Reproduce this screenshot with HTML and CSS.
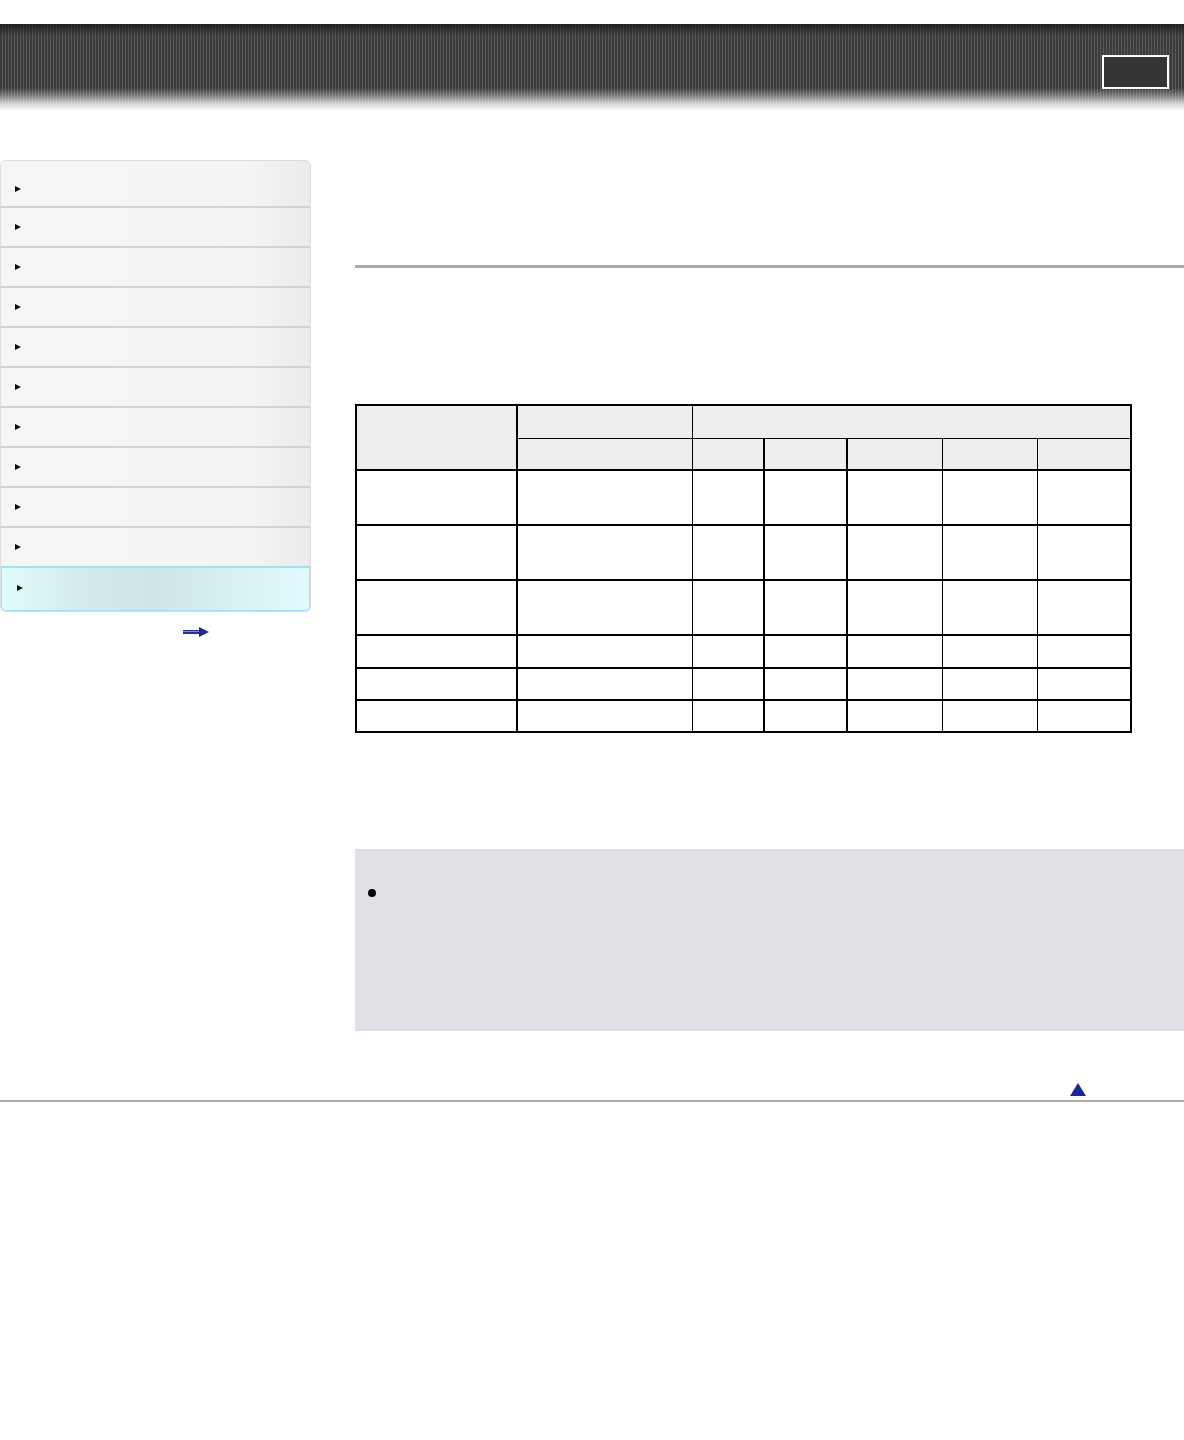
FILE: index.html
```html
<!DOCTYPE html>
<html>
<head>
<meta charset="utf-8">
<link rel="stylesheet" href="styles.css">
</head>
<body>
<header class="banner">
  <div class="banner-box"></div>
</header>
<div class="layout">
  <aside class="sidebar">
    <nav class="menu">
      <div class="item first"><span class="tri"></span></div>
      <div class="item"><span class="tri"></span></div>
      <div class="item"><span class="tri"></span></div>
      <div class="item"><span class="tri"></span></div>
      <div class="item"><span class="tri"></span></div>
      <div class="item"><span class="tri"></span></div>
      <div class="item"><span class="tri"></span></div>
      <div class="item"><span class="tri"></span></div>
      <div class="item"><span class="tri"></span></div>
      <div class="item"><span class="tri"></span></div>
      <div class="item active"><span class="tri"></span></div>
    </nav>
    <div class="more">
      <svg width="26" height="10" viewBox="0 0 26 10"><rect x="0" y="3" width="17" height="4" fill="#2a2f8f"/><rect x="0" y="4" width="17" height="1" fill="#8a8fd0"/><path d="M16 0 L26 5 L16 10 Z" fill="#1f2590"/></svg>
    </div>
  </aside>
  <main class="content">
    <div class="title-area"></div>
    <div class="rule"></div>
    <div class="intro"></div>
    <table class="spec">
      <colgroup>
        <col class="w1"><col class="w2"><col class="w3"><col class="w4"><col class="w5"><col class="w6"><col class="w7">
      </colgroup>
      <tr class="h1">
        <th rowspan="2" class="c1"></th>
        <th></th>
        <th colspan="5"></th>
      </tr>
      <tr class="h2">
        <th></th>
        <th class="thick-r"></th>
        <th class="thick-r"></th>
        <th></th>
        <th></th>
        <th></th>
      </tr>
      <tr class="tall"><td></td><td></td><td></td><td class="thick"></td><td class="thick"></td><td></td><td></td></tr>
      <tr class="tall"><td></td><td></td><td></td><td class="thick"></td><td class="thick"></td><td></td><td></td></tr>
      <tr class="tall"><td></td><td></td><td></td><td class="thick"></td><td class="thick"></td><td></td><td></td></tr>
      <tr class="short"><td></td><td></td><td></td><td class="thick"></td><td class="thick"></td><td></td><td></td></tr>
      <tr class="short2"><td></td><td></td><td></td><td class="thick"></td><td class="thick"></td><td></td><td></td></tr>
      <tr class="short2"><td></td><td></td><td></td><td class="thick"></td><td class="thick"></td><td></td><td></td></tr>
    </table>
    <div class="note">
      <ul class="note-list"><li></li></ul>
    </div>
    <div class="back-top">
      <svg width="16" height="14" viewBox="0 0 16 14"><path d="M8 0 L16 13 L0 13 Z" fill="#1c2496"/></svg>
    </div>
  </main>
</div>
<div class="footer-rule"></div>
</body>
</html>
```

FILE: styles.css
```css
html, body {
  margin: 0;
  padding: 0;
  background: #ffffff;
  font-family: "Liberation Sans", Arial, sans-serif;
  font-size: 13px;
  color: #000;
}

.banner {
  margin-top: 24px;
  height: 88px;
  position: relative;
  background:
    linear-gradient(to bottom,
      rgba(20,20,20,0.75) 0px,
      rgba(20,20,20,0) 12px,
      rgba(255,255,255,0) 64px,
      rgba(255,255,255,0.35) 72px,
      rgba(255,255,255,0.8) 80px,
      rgba(255,255,255,1) 87px),
    repeating-linear-gradient(to right,
      #3b3b3b 0px, #3b3b3b 2px,
      #5a5a5a 2px, #5a5a5a 3px);
}

.banner-box {
  position: absolute;
  left: 1102px;
  top: 31px;
  width: 63px;
  height: 30px;
  border: 2px solid #ffffff;
  background: #353535;
}

.layout {
  display: flex;
  align-items: flex-start;
  margin-top: 48px;
}

.sidebar {
  width: 311px;
  flex: none;
}

.menu {
  border: 1px solid #dcdcdc;
  border-radius: 6px;
  overflow: hidden;
  background: linear-gradient(to right, #f6f6f6 0%, #f4f4f4 80%, #ebebeb 100%);
}

.item {
  height: 40px;
  box-sizing: border-box;
  border-top: 2px solid #d2d2d2;
  display: flex;
  align-items: center;
  padding-left: 14px;
}

.item.first {
  border-top: none;
  height: 45px;
  padding-top: 10px;
}

.item.active {
  border: 2px solid #9fe0f5;
  border-radius: 0 0 6px 6px;
  margin: 0 -1px -1px -1px;
  padding-left: 15px;
  align-items: flex-start;
  padding-top: 17px;
  height: 46px;
  background: linear-gradient(to right, #e0fbfd 0%, #d2e8ea 30%, #cfe4e6 50%, #d6eef0 70%, #e0fbfd 100%);
}

.tri {
  width: 0;
  height: 0;
  border-top: 3px solid transparent;
  border-bottom: 3px solid transparent;
  border-left: 6px solid #111;
}

.more {
  display: flex;
  justify-content: flex-start;
  padding-left: 183px;
  margin-top: 15px;
}

.content {
  margin-left: 44px;
  flex: 1;
}

.title-area {
  height: 105px;
}

.rule {
  height: 3px;
  background: #aaaaaa;
}

.intro {
  height: 136px;
}

.spec {
  border-collapse: collapse;
  border: 2px solid #000;
  table-layout: fixed;
  width: 775px;
}

.spec col.w1 { width: 161px; }
.spec col.w2 { width: 175px; }
.spec col.w3 { width: 72px; }
.spec col.w4 { width: 83px; }
.spec col.w5 { width: 95px; }
.spec col.w6 { width: 95px; }
.spec col.w7 { width: 94px; }

.spec th, .spec td {
  border: 1px solid #000;
  padding: 0;
}

.spec th {
  background: #eeeeee;
}

.spec .c1 { border-right: 2px solid #000; border-bottom: 2px solid #000; }
.spec th.thick-r { border-right: 2px solid #000; }

.spec tr.h1 { height: 33px; }
.spec tr.h2 { height: 32px; }
.spec tr.h2 th { border-bottom: 2px solid #000; }
.spec tr.tall { height: 55px; }
.spec tr.short { height: 33px; }
.spec tr.short2 { height: 32px; }
.spec tr td { border-bottom: 2px solid #000; }
.spec td:first-child { border-right: 2px solid #000; }
.spec td.thick { border-left: 2px solid #000; }

.note {
  margin-top: 116px;
  height: 182px;
  background: #dfe1e6;
  padding: 40px 0 0 13px;
  box-sizing: border-box;
}

.note-list {
  margin: 0;
  padding: 0;
  list-style: none;
}

.note-list li {
  width: 8px;
  height: 8px;
  border-radius: 50%;
  background: #000;
}

.back-top {
  display: flex;
  justify-content: flex-end;
  padding-right: 98px;
  margin-top: 52px;
  height: 18px;
}

.footer-rule {
  height: 2px;
  background: #aaaaaa;
  margin-top: -1px;
}
```
